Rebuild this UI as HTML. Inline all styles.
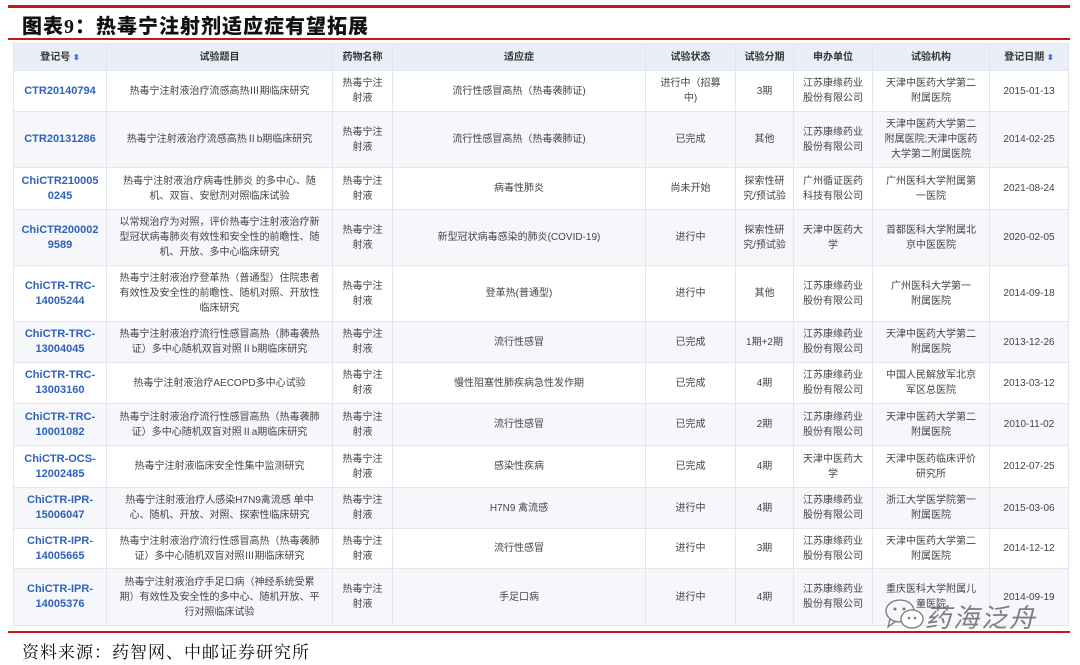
<!DOCTYPE html>
<html><head><meta charset="utf-8"><style>
body{margin:0;width:1080px;height:665px;background:#fff;position:relative;overflow:hidden;font-family:"Liberation Sans","Noto Sans CJK SC",sans-serif}
.rl{position:absolute;background:#c8161d}
.title{position:absolute;left:22px;top:10px;font-family:"Liberation Serif","Noto Sans CJK SC",sans-serif;font-weight:900;font-size:20px;color:#111;letter-spacing:1px}
table{position:absolute;left:13px;top:43px;width:1055px;border-collapse:collapse;table-layout:fixed}
td,th{border:1px solid #e3e6ec;text-align:center;vertical-align:middle;font-size:10px;color:#444;line-height:15px;padding:0 5px;font-weight:normal;word-break:break-all}
th{background:#e9eef7;color:#333;font-weight:bold;height:26px}
tr:nth-child(odd) td{background:#f5f7fb}
td.c{color:#2f62b8;font-weight:bold;font-size:11px;line-height:15px;padding:0 3px}
.s{color:#3a6fd0;font-size:8px}
.foot{position:absolute;left:22px;top:638px;font-family:"Liberation Serif","Noto Serif CJK SC",serif;font-size:17px;color:#111;letter-spacing:1px}
.wm{position:absolute;left:925px;top:598px;font-size:26px;color:#555;font-style:italic;opacity:.75;letter-spacing:2px}
</style></head><body>
<div class="rl" style="left:8px;top:5px;width:1062px;height:3px"></div>
<div class="title">图表9：热毒宁注射剂适应症有望拓展</div>
<div class="rl" style="left:8px;top:38px;width:1062px;height:2px"></div>
<table>
<colgroup><col style="width:93px"><col style="width:226px"><col style="width:60px"><col style="width:253px"><col style="width:90px"><col style="width:58px"><col style="width:79px"><col style="width:117px"><col style="width:79px"></colgroup>
<tr><th>登记号 <span class="s">⬍</span></th><th>试验题目</th><th>药物名称</th><th>适应症</th><th>试验状态</th><th>试验分期</th><th>申办单位</th><th>试验机构</th><th>登记日期 <span class="s">⬍</span></th></tr>
<tr style="height:41px"><td class="c">CTR20140794</td><td>热毒宁注射液治疗流感高热Ⅲ期临床研究</td><td>热毒宁注<br>射液</td><td>流行性感冒高热（热毒袭肺证)</td><td>进行中（招募<br>中)</td><td>3期</td><td>江苏康缘药业<br>股份有限公司</td><td>天津中医药大学第二<br>附属医院</td><td>2015-01-13</td></tr>
<tr style="height:56px"><td class="c">CTR20131286</td><td>热毒宁注射液治疗流感高热Ⅱb期临床研究</td><td>热毒宁注<br>射液</td><td>流行性感冒高热（热毒袭肺证)</td><td>已完成</td><td>其他</td><td>江苏康缘药业<br>股份有限公司</td><td>天津中医药大学第二<br>附属医院;天津中医药<br>大学第二附属医院</td><td>2014-02-25</td></tr>
<tr style="height:42px"><td class="c">ChiCTR210005<br>0245</td><td>热毒宁注射液治疗病毒性肺炎 的多中心、随<br>机、双盲、安慰剂对照临床试验</td><td>热毒宁注<br>射液</td><td>病毒性肺炎</td><td>尚未开始</td><td>探索性研<br>究/预试验</td><td>广州循证医药<br>科技有限公司</td><td>广州医科大学附属第<br>一医院</td><td>2021-08-24</td></tr>
<tr style="height:56px"><td class="c">ChiCTR200002<br>9589</td><td>以常规治疗为对照，评价热毒宁注射液治疗新<br>型冠状病毒肺炎有效性和安全性的前瞻性、随<br>机、开放、多中心临床研究</td><td>热毒宁注<br>射液</td><td>新型冠状病毒感染的肺炎(COVID-19)</td><td>进行中</td><td>探索性研<br>究/预试验</td><td>天津中医药大<br>学</td><td>首都医科大学附属北<br>京中医医院</td><td>2020-02-05</td></tr>
<tr style="height:56px"><td class="c">ChiCTR-TRC-<br>14005244</td><td>热毒宁注射液治疗登革热（普通型）住院患者<br>有效性及安全性的前瞻性、随机对照、开放性<br>临床研究</td><td>热毒宁注<br>射液</td><td>登革热(普通型)</td><td>进行中</td><td>其他</td><td>江苏康缘药业<br>股份有限公司</td><td>广州医科大学第一<br>附属医院</td><td>2014-09-18</td></tr>
<tr style="height:41px"><td class="c">ChiCTR-TRC-<br>13004045</td><td>热毒宁注射液治疗流行性感冒高热（肺毒袭热<br>证）多中心随机双盲对照Ⅱb期临床研究</td><td>热毒宁注<br>射液</td><td>流行性感冒</td><td>已完成</td><td>1期+2期</td><td>江苏康缘药业<br>股份有限公司</td><td>天津中医药大学第二<br>附属医院</td><td>2013-12-26</td></tr>
<tr style="height:41px"><td class="c">ChiCTR-TRC-<br>13003160</td><td>热毒宁注射液治疗AECOPD多中心试验</td><td>热毒宁注<br>射液</td><td>慢性阻塞性肺疾病急性发作期</td><td>已完成</td><td>4期</td><td>江苏康缘药业<br>股份有限公司</td><td>中国人民解放军北京<br>军区总医院</td><td>2013-03-12</td></tr>
<tr style="height:42px"><td class="c">ChiCTR-TRC-<br>10001082</td><td>热毒宁注射液治疗流行性感冒高热（热毒袭肺<br>证）多中心随机双盲对照Ⅱa期临床研究</td><td>热毒宁注<br>射液</td><td>流行性感冒</td><td>已完成</td><td>2期</td><td>江苏康缘药业<br>股份有限公司</td><td>天津中医药大学第二<br>附属医院</td><td>2010-11-02</td></tr>
<tr style="height:42px"><td class="c">ChiCTR-OCS-<br>12002485</td><td>热毒宁注射液临床安全性集中监测研究</td><td>热毒宁注<br>射液</td><td>感染性疾病</td><td>已完成</td><td>4期</td><td>天津中医药大<br>学</td><td>天津中医药临床评价<br>研究所</td><td>2012-07-25</td></tr>
<tr style="height:41px"><td class="c">ChiCTR-IPR-<br>15006047</td><td>热毒宁注射液治疗人感染H7N9禽流感 单中<br>心、随机、开放、对照、探索性临床研究</td><td>热毒宁注<br>射液</td><td>H7N9 禽流感</td><td>进行中</td><td>4期</td><td>江苏康缘药业<br>股份有限公司</td><td>浙江大学医学院第一<br>附属医院</td><td>2015-03-06</td></tr>
<tr style="height:40px"><td class="c">ChiCTR-IPR-<br>14005665</td><td>热毒宁注射液治疗流行性感冒高热（热毒袭肺<br>证）多中心随机双盲对照Ⅲ期临床研究</td><td>热毒宁注<br>射液</td><td>流行性感冒</td><td>进行中</td><td>3期</td><td>江苏康缘药业<br>股份有限公司</td><td>天津中医药大学第二<br>附属医院</td><td>2014-12-12</td></tr>
<tr style="height:57px"><td class="c">ChiCTR-IPR-<br>14005376</td><td>热毒宁注射液治疗手足口病（神经系统受累<br>期）有效性及安全性的多中心、随机开放、平<br>行对照临床试验</td><td>热毒宁注<br>射液</td><td>手足口病</td><td>进行中</td><td>4期</td><td>江苏康缘药业<br>股份有限公司</td><td>重庆医科大学附属儿<br>童医院</td><td>2014-09-19</td></tr>
</table>
<svg style="position:absolute;left:884px;top:598px" width="44" height="34" viewBox="0 0 44 34"><g fill="none" stroke="#777" stroke-width="1.3"><ellipse cx="16" cy="13" rx="14" ry="11"/><path d="M6 21 L4 29 L12 23"/><ellipse cx="28" cy="21" rx="11" ry="9" fill="#fff"/></g><g fill="#777"><circle cx="11" cy="11" r="1.5"/><circle cx="20" cy="11" r="1.5"/><circle cx="25" cy="20" r="1.3"/><circle cx="31" cy="20" r="1.3"/></g></svg>
<div class="wm">药海泛舟</div>
<div class="rl" style="left:8px;top:631px;width:1062px;height:2px"></div>
<div class="foot">资料来源：药智网、中邮证券研究所</div>
</body></html>
